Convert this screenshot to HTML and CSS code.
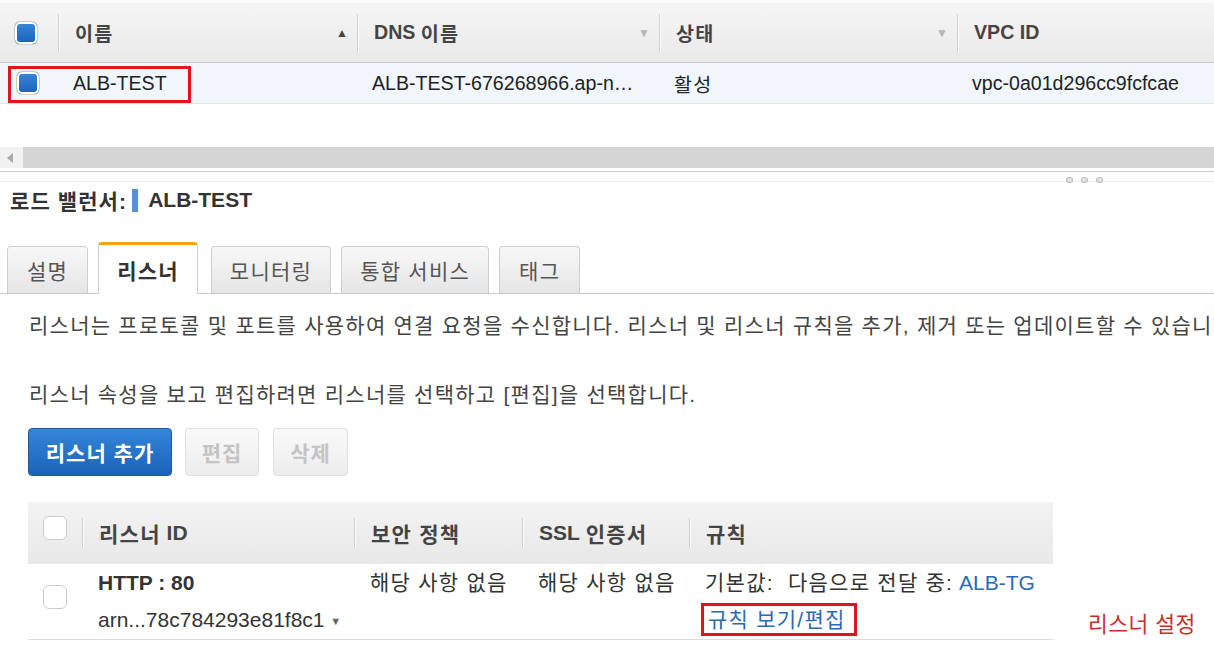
FILE: index.html
```html
<!DOCTYPE html>
<html lang="ko">
<head>
  <meta charset="UTF-8">
  <title>로드 밸런서 - 리스너</title>
  <meta name="viewport" content="width=device-width,initial-scale=1">
  <link rel="stylesheet" href="styles.css">
</head>
<body>
  <!-- 로드 밸런서 목록 -->
  <div class="lb-list">
    <div class="lb-head">
      <div class="hcell chk-cell"><span class="chk on"></span></div>
      <div class="hcell"><span class="kr">이름</span><span class="sort active">&#9650;</span></div>
      <div class="hcell">DNS <span class="kr">이름</span><span class="sort">&#9660;</span></div>
      <div class="hcell"><span class="kr">상태</span><span class="sort">&#9660;</span></div>
      <div class="hcell">VPC ID</div>
    </div>
    <div class="lb-row">
      <div class="rcell chk-cell"><span class="chk on"></span></div>
      <div class="rcell">ALB-TEST</div>
      <div class="rcell">ALB-TEST-676268966.ap-n…</div>
      <div class="rcell kr">활성</div>
      <div class="rcell">vpc-0a01d296cc9fcfcae</div>
    </div>
    <div class="mark"></div>
  </div>

  <div class="hscroll">
    <div class="hs-btn"><span class="hs-arrow"></span></div>
    <div class="hs-track"></div>
  </div>
  <div class="splitter">
    <span class="dot"></span><span class="dot"></span><span class="dot"></span>
  </div>

  <div class="lower">
    <h2 class="lb-title"><span class="kr">로드 밸런서:</span><span class="bar"></span>ALB-TEST</h2>

    <!-- 탭 -->
    <div class="tabs">
      <div class="tab">설명</div>
      <div class="tab active">리스너</div>
      <div class="tab">모니터링</div>
      <div class="tab">통합 서비스</div>
      <div class="tab">태그</div>
    </div>

    <p class="desc">리스너는 프로토콜 및 포트를 사용하여 연결 요청을 수신합니다. 리스너 및 리스너 규칙을 추가, 제거 또는 업데이트할 수 있습니다.</p>
    <p class="desc second">리스너 속성을 보고 편집하려면 리스너를 선택하고 [편집]을 선택합니다.</p>

    <div class="actions">
      <button class="btn primary">리스너 추가</button>
      <button class="btn off">편집</button>
      <button class="btn off del">삭제</button>
    </div>

    <!-- 리스너 목록 -->
    <div class="lst-wrap">
      <div class="lst">
        <div class="lst-head">
          <div class="hcell chk-cell"><span class="chk"></span></div>
          <div class="hcell"><span class="kr">리스너</span>&nbsp;ID</div>
          <div class="hcell kr">보안 정책</div>
          <div class="hcell">SSL&nbsp;<span class="kr">인증서</span></div>
          <div class="hcell kr">규칙</div>
        </div>
        <div class="lst-row">
          <div class="rcell chk-cell"><span class="chk"></span></div>
          <div class="rcell">
            <div class="line b">HTTP : 80</div>
            <div class="line">arn...78c784293e81f8c1 <span class="caret">&#9660;</span></div>
          </div>
          <div class="rcell kr"><div class="line">해당 사항 없음</div></div>
          <div class="rcell kr"><div class="line">해당 사항 없음</div></div>
          <div class="rcell">
            <div class="line"><span class="kr">기본값:&nbsp; 다음으로 전달 중:</span> <a class="lnk">ALB-TG</a></div>
            <div class="line"><a class="lnk kr boxed">규칙 보기/편집</a></div>
          </div>
        </div>
      </div>
      <div class="note">리스너 설정</div>
    </div>
  </div>
</body>
</html>
```

FILE: styles.css
```css
:root {
  --text: #333;
  --head: #444;
  --line: #c8c8c8;
  --blue: #2a6ab6;
  --red: #e3121b;
}
* { box-sizing: border-box; }
body {
  margin: 0; width: 1214px; overflow: hidden;
  font-family: "Liberation Sans", "Noto Sans CJK KR", sans-serif;
  font-size: 19.6px; color: var(--text); background: #fff;
}
.kr { letter-spacing: 1.1px; }

/* top list */
.lb-list { position: relative; padding-top: 3px; background: #fafafa; }
.lb-head, .lb-row {
  display: grid; grid-template-columns: 58px 299px 302px 298px 1fr;
  align-items: center;
}
.lb-head {
  height: 60px; font-weight: bold; color: var(--head);
  background: linear-gradient(#f5f5f5, #e9e9e9);
  border-bottom: 1px solid #c6c6c6;
}
.hcell {
  height: 38px; display: flex; align-items: center; white-space: pre;
  padding-left: 16px; border-left: 1px solid #d2d2d2;
  box-shadow: inset 1px 0 0 #fafafa;
}
.hcell.chk-cell { border-left: none; box-shadow: none; padding-left: 14px; }
.sort { margin-left: auto; margin-right: 9px; font-size: 12px; color: #b5b5b5; }
.sort.active { color: #444; }
.lb-row {
  height: 41px; background: #f0f6fc; border-bottom: 1px solid #dee5ec;
  color: #222;
}
.rcell { padding-left: 15px; }
.rcell.chk-cell { padding-left: 16px; display: flex; }
.mark {
  position: absolute; left: 8px; top: 66px; width: 183px; height: 37px;
  border: 3px solid var(--red);
}

.chk {
  display: inline-block; width: 24px; height: 24px; border-radius: 6px;
  border: 1px solid #cbcbcb; background: #fff;
}
.chk.on {
  background: linear-gradient(#3c88da, #1561bb);
  box-shadow: inset 0 0 0 2px #fff;
}

/* scroll + splitter */
.hscroll { margin-top: 43px; height: 21px; display: flex; }
.hs-btn {
  width: 23px; background: #f1f1f1;
  display: flex; align-items: center; justify-content: center;
}
.hs-arrow {
  width: 0; height: 0; margin-right: 4px;
  border-top: 5px solid transparent; border-bottom: 5px solid transparent;
  border-right: 6px solid #a8a8a8;
}
.hs-track { flex: 1; background: #d6d6d6; }
.splitter {
  margin-top: 3px; height: 11px;
  border-top: 1px solid #cdcdcd; border-bottom: 1px solid #eeeeee;
  display: flex; align-items: flex-end; gap: 8px; padding-left: 1066px;
}
.dot {
  width: 7px; height: 6px; margin-bottom: -2px; border-radius: 50%;
  border: 1px solid #b9b9b9; background: #e4e4e4;
}

/* lower panel */
.lower { font-size: 21px; }
.lower .kr { letter-spacing: 1.25px; }
.lb-title {
  margin: 0; padding-left: 10px; height: 36px;
  display: flex; align-items: center;
  font-size: 21px; color: #333;
}
.lb-title .kr { letter-spacing: 1.1px; }
.bar {
  width: 6px; height: 23px; background: #5393d3;
  margin: 0 10px 0 5px;
}

/* tabs */
.tabs {
  margin-top: 24px; height: 52px; padding-left: 7px;
  display: flex; align-items: flex-end; gap: 10px;
  border-bottom: 1px solid var(--line);
}
.tab {
  height: 47px; padding: 0 18px; display: flex; align-items: center;
  border: 1px solid #cfcfcf; border-bottom: none; border-radius: 4px 4px 0 0;
  background: linear-gradient(#f8f8f8, #e5e5e5);
  color: #555; letter-spacing: 1.25px; white-space: nowrap;
}
.tab:first-child, .tab:last-child { padding: 0 19px; }
.tab.active {
  height: 52px; margin-bottom: -1px; margin-right: 3px;
  background: #fff; border-top: 3px solid #f3a21c;
  font-weight: bold; color: #333;
}

/* text + buttons */
.desc {
  margin: 17px 0 0; padding-left: 29px; line-height: 30px;
  letter-spacing: 1.25px; color: #444; white-space: nowrap;
}
.desc.second { margin-top: 39px; }
.actions { margin: 18px 0 0 28px; display: flex; gap: 13px; }
.btn {
  height: 48px; border-radius: 4px; padding: 0;
  font-family: inherit; font-size: 21px; font-weight: bold; letter-spacing: 1px;
}
.btn.primary {
  width: 144px; color: #fff; border: 1px solid #1d5aa5;
  background: linear-gradient(#3386db, #1b62b9);
}
.btn.off {
  width: 74px; color: #c4c4c4; border: 1px solid #e0e0e0;
  background: linear-gradient(#fafafa, #ececec);
}
.btn.del { width: 75px; margin-left: 1px; }

/* listener table */
.lst-wrap { margin: 26px 0 0 28px; display: flex; align-items: flex-end; }
.lst { width: 1025px; flex-shrink: 0; }
.lst-head, .lst-row {
  display: grid; grid-template-columns: 54px 272px 168px 167px 1fr;
}
.lst-head {
  height: 62px; align-items: center; font-weight: bold; color: var(--head);
  background: linear-gradient(#f3f3f3, #e8e8e8);
}
.lst-head .hcell { height: 30px; }
.lst-head .hcell.chk-cell { padding-left: 15px; margin-top: -10px; }
.lst-row {
  height: 76px; border-bottom: 1px solid #dcdcdc;
}
.lst-row .rcell { padding-left: 16px; }
.lst-row .rcell.chk-cell { padding-left: 15px; padding-top: 21px; }
.line { height: 37px; line-height: 37px; white-space: nowrap; }
.line.b { font-weight: bold; }
.caret { font-size: 11px; color: #666; vertical-align: 2px; }
.lnk { color: var(--blue); text-decoration: none; }
.boxed {
  display: inline-block; height: 33px; line-height: 27px; margin-left: -4px;
  padding: 0 8px 0 4px; border: 3px solid var(--red);
}
.note {
  margin: 0 0 3px 35px; font-size: 21.5px; letter-spacing: .5px;
  color: #cf2b2b; line-height: 24px; white-space: nowrap;
}
```
